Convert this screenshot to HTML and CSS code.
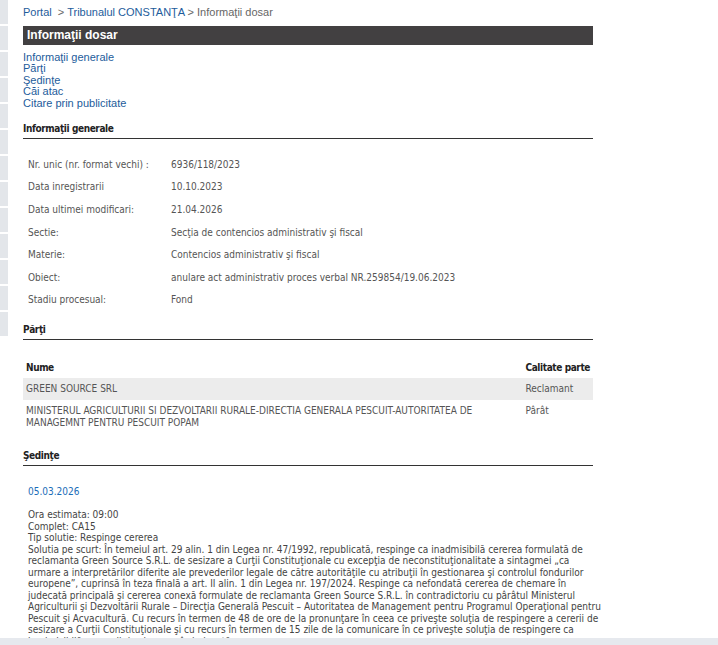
FILE: index.html
```html
<!DOCTYPE html>
<html lang="ro">
<head>
    <meta charset="UTF-8">
    <title>Informaţii dosar</title>
    <link rel="stylesheet" href="styles.css">
</head>
<body>
    <div class="page">
        <div class="side">
            <div></div><div></div><div></div><div></div><div></div><div></div><div></div>
            <div></div><div></div><div></div><div></div><div></div><div></div>
        </div>
        <div class="main">
            <div class="crumbs">
                <a href="#">Portal</a> &nbsp;&gt; <a href="#">Tribunalul CONSTANŢA</a> &gt; Informaţii dosar
            </div>
            <div class="title-bar">Informaţii dosar</div>
            <ul class="toc">
                <li><a href="#">Informaţii generale</a></li>
                <li><a href="#">Părţi</a></li>
                <li><a href="#">Şedinţe</a></li>
                <li><a href="#">Căi atac</a></li>
                <li class="last"><a href="#">Citare prin publicitate</a></li>
            </ul>

            <h2 class="section first">Informaţii generale</h2>
            <table class="info">
                <tr><td class="lbl">Nr. unic (nr. format vechi) :</td><td>6936/118/2023</td></tr>
                <tr><td class="lbl">Data inregistrarii</td><td>10.10.2023</td></tr>
                <tr><td class="lbl">Data ultimei modificari:</td><td>21.04.2026</td></tr>
                <tr><td class="lbl">Sectie:</td><td>Secţia de contencios administrativ şi fiscal</td></tr>
                <tr><td class="lbl">Materie:</td><td>Contencios administrativ şi fiscal</td></tr>
                <tr><td class="lbl">Obiect:</td><td>anulare act administrativ proces verbal NR.259854/19.06.2023</td></tr>
                <tr><td class="lbl">Stadiu procesual:</td><td>Fond</td></tr>
            </table>

            <h2 class="section after-info">Părţi</h2>
            <table class="parti">
                <tr><th>Nume</th><th class="cal">Calitate parte</th></tr>
                <tr class="alt"><td>GREEN SOURCE SRL</td><td class="cal">Reclamant</td></tr>
                <tr><td>MINISTERUL AGRICULTURII SI DEZVOLTARII RURALE-DIRECTIA GENERALA PESCUIT-AUTORITATEA DE MANAGEMNT PENTRU PESCUIT POPAM</td><td class="cal">Pârât</td></tr>
            </table>

            <h2 class="section">Şedinţe</h2>
            <div class="sedinta">
                <a class="data" href="#">05.03.2026</a>
                <p>
                    Ora estimata: 09:00<br>
                    Complet: CA15<br>
                    Tip solutie: Respinge cererea<br>
                    Solutia pe scurt: În temeiul art. 29 alin. 1 din Legea nr. 47/1992, republicată, respinge ca inadmisibilă cererea formulată de<br>
                    reclamanta Green Source S.R.L. de sesizare a Curţii Constituţionale cu excepţia de neconstituţionalitate a sintagmei „ca<br>
                    urmare a interpretărilor diferite ale prevederilor legale de către autorităţile cu atribuţii în gestionarea şi controlul fondurilor<br>
                    europene”, cuprinsă în teza finală a art. II alin. 1 din Legea nr. 197/2024. Respinge ca nefondată cererea de chemare în<br>
                    judecată principală şi cererea conexă formulate de reclamanta Green Source S.R.L. în contradictoriu cu pârâtul Ministerul<br>
                    Agriculturii şi Dezvoltării Rurale – Direcţia Generală Pescuit – Autoritatea de Management pentru Programul Operaţional pentru<br>
                    Pescuit şi Acvacultură. Cu recurs în termen de 48 de ore de la pronunţare în ceea ce priveşte soluţia de respingere a cererii de<br>
                    sesizare a Curţii Constituţionale şi cu recurs în termen de 15 zile de la comunicare în ce priveşte soluţia de respingere ca<br>
                    inadmisibilă a cererii de chemare în judecată.
                </p>
            </div>
        </div>
    </div>
    <div class="bottom-bar"></div>
</body>
</html>
```

FILE: styles.css
```css
body {
    margin: 0;
    font-family: "Liberation Sans", Arial, sans-serif;
    font-size: 11px;
    color: #333;
    background: #fff;
}

a {
    color: #1d5c9b;
    text-decoration: none;
}

.page {
    display: flex;
    align-items: flex-start;
}

/* strip of grey tabs on the left edge */
.side {
    width: 8px;
    display: flex;
    flex-direction: column;
    gap: 2px;
}

.side div {
    height: 24px;
    background: #e3e6ea;
}

.main {
    width: 570px;
    margin-left: 15px;
}

.crumbs {
    color: #666;
    padding-top: 6px;
    height: 13px;
    line-height: 13px;
}

.title-bar {
    margin-top: 7px;
    height: 19px;
    line-height: 19px;
    background: #424041;
    color: #fff;
    font-weight: bold;
    font-size: 12px;
    padding-left: 4px;
}

.toc {
    list-style: none;
    margin: 7px 0 0;
    padding: 0;
    line-height: 11.3px;
}

.toc .last {
    margin-top: 0.5px;
}

/* everything below the link list uses the narrower body font */
.section,
.info,
.parti,
.sedinta {
    font-family: "DejaVu Sans Condensed", "DejaVu Sans", sans-serif;
}

.section {
    font-size: 10px;
    font-weight: bold;
    letter-spacing: -0.4px;
    color: #222;
    margin: 14px 0 0;
    padding-bottom: 3px;
    line-height: 13px;
    border-bottom: 1px solid #333;
}

.section.first {
    margin-top: 13px;
}

.section.after-info {
    margin-top: 12px;
}

.info {
    border-collapse: collapse;
    margin-top: 14px;
    font-size: 10px;
    color: #555;
}

.info td {
    height: 22.6px;
    padding: 0 0 0 5px;
}

.info .lbl {
    width: 138px;
}

.parti {
    width: 100%;
    border-collapse: collapse;
    margin-top: 16px;
    font-size: 10px;
    color: #555;
}

.parti th {
    text-align: left;
    color: #222;
    height: 22px;
    padding: 0 3px;
    white-space: nowrap;
    letter-spacing: -0.4px;
}

.parti td {
    padding: 5px 3px;
    line-height: 12px;
    vertical-align: top;
}

.parti tr.alt td {
    background: #ececec;
}

.parti .cal {
    width: 64px;
}

.parti tr:last-child td {
    padding-bottom: 6px;
}

.sedinta {
    padding: 20px 0 0 5px;
    font-size: 10px;
}

.data {
    color: #1b6db8;
}

.sedinta p {
    margin: 12px 0 0;
    line-height: 11.5px;
    white-space: nowrap;
    color: #444;
}

.bottom-bar {
    position: fixed;
    left: 0;
    right: 0;
    bottom: 0;
    height: 7px;
    background: #e6e9ee;
}
```
